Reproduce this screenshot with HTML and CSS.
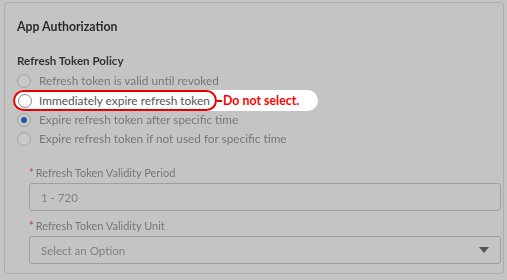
FILE: index.html
```html
<!DOCTYPE html>
<html lang="en">
<head>
    <meta charset="UTF-8">
    <title>App Authorization</title>
    <link rel="stylesheet" href="styles.css">
</head>
<body>
    <div class="card">
        <h2 class="title dim">App Authorization</h2>

        <div class="policy">
            <div class="policy-label dim">Refresh Token Policy</div>
            <label class="option dim"><span class="radio"></span>Refresh token is valid until revoked</label>
            <div class="callout">
                <label class="option marked"><span class="radio"></span>Immediately expire refresh token</label>
                <span class="dash"></span>
                <span class="note">Do not select.</span>
            </div>
            <label class="option dim"><span class="radio checked"></span>Expire refresh token after specific time</label>
            <label class="option dim"><span class="radio"></span>Expire refresh token if not used for specific time</label>
        </div>

        <div class="fields">
            <div class="field">
                <div class="field-label dim"><abbr>*</abbr>Refresh Token Validity Period</div>
                <div class="input dim">1 - 720</div>
            </div>
            <div class="field">
                <div class="field-label dim"><abbr>*</abbr>Refresh Token Validity Unit</div>
                <div class="input select dim">Select an Option<span class="caret"></span></div>
            </div>
        </div>
    </div>
</body>
</html>
```

FILE: styles.css
```css
* {
    margin: 0;
    padding: 0;
    box-sizing: border-box;
}
body {
    background: #c4c4c4;
    font-family: Lato, "Noto Sans", sans-serif;
    width: 507px;
    height: 280px;
    overflow: hidden;
    padding: 2px 3px 6px 4px;
}
.dim {
    filter: blur(0.5px);
}
.card {
    border: 1px solid #adadad;
    border-radius: 4px;
    height: 272px;
    padding: 15px 0 0 12px;
}
.title {
    font-size: 12.3px;
    font-weight: 700;
    color: #2a2a2a;
    line-height: 18px;
}
.policy {
    margin-top: 17px;
    display: flex;
    flex-direction: column;
}
.policy-label {
    font-size: 11.6px;
    font-weight: 700;
    color: #333;
    line-height: 16px;
    margin-bottom: 2px;
}
.option {
    display: flex;
    align-items: center;
    gap: 8px;
    font-size: 11.8px;
    color: #777;
    height: 19px;
    white-space: nowrap;
}
.radio {
    flex-shrink: 0;
    width: 14px;
    height: 14px;
    border: 1px solid #a3a3a3;
    border-radius: 50%;
    background: #c8c8c8;
    display: flex;
    align-items: center;
    justify-content: center;
}
.radio.checked::after {
    content: "";
    width: 6px;
    height: 6px;
    border-radius: 50%;
    background: #1e5aa8;
}
.callout {
    display: flex;
    align-items: center;
    background: #fff;
    border-radius: 11px;
    width: 305px;
    height: 21px;
    margin: 0 0 -1px -4px;
    white-space: nowrap;
}
.option.marked {
    height: 21px;
    border: 2px solid #e60000;
    border-radius: 11px;
    padding: 0 5px 0 3px;
    color: #555;
    font-size: 11.9px;
    gap: 7px;
}
.option.marked .radio {
    background: #fff;
    border-color: #888;
}
.dash {
    flex-shrink: 0;
    width: 5px;
    height: 2px;
    background: #e60000;
}
.note {
    font-size: 12.4px;
    font-weight: 700;
    color: #f00;
    margin-left: 1px;
}
.fields {
    margin: 18px 0 0 12px;
    width: 472px;
    display: flex;
    flex-direction: column;
    gap: 8px;
}
.field-label {
    font-size: 11px;
    color: #777;
    line-height: 14px;
    margin-bottom: 3px;
}
.field-label abbr {
    color: #c23934;
    margin-right: 2px;
}
.input {
    height: 28px;
    border: 1px solid #9f9f9f;
    border-radius: 3px;
    font-size: 11.5px;
    color: #808080;
    display: flex;
    align-items: center;
    padding: 0 11px;
}
.select {
    justify-content: space-between;
}
.caret {
    width: 0;
    height: 0;
    border-left: 5px solid transparent;
    border-right: 5px solid transparent;
    border-top: 6px solid #555;
}
```
